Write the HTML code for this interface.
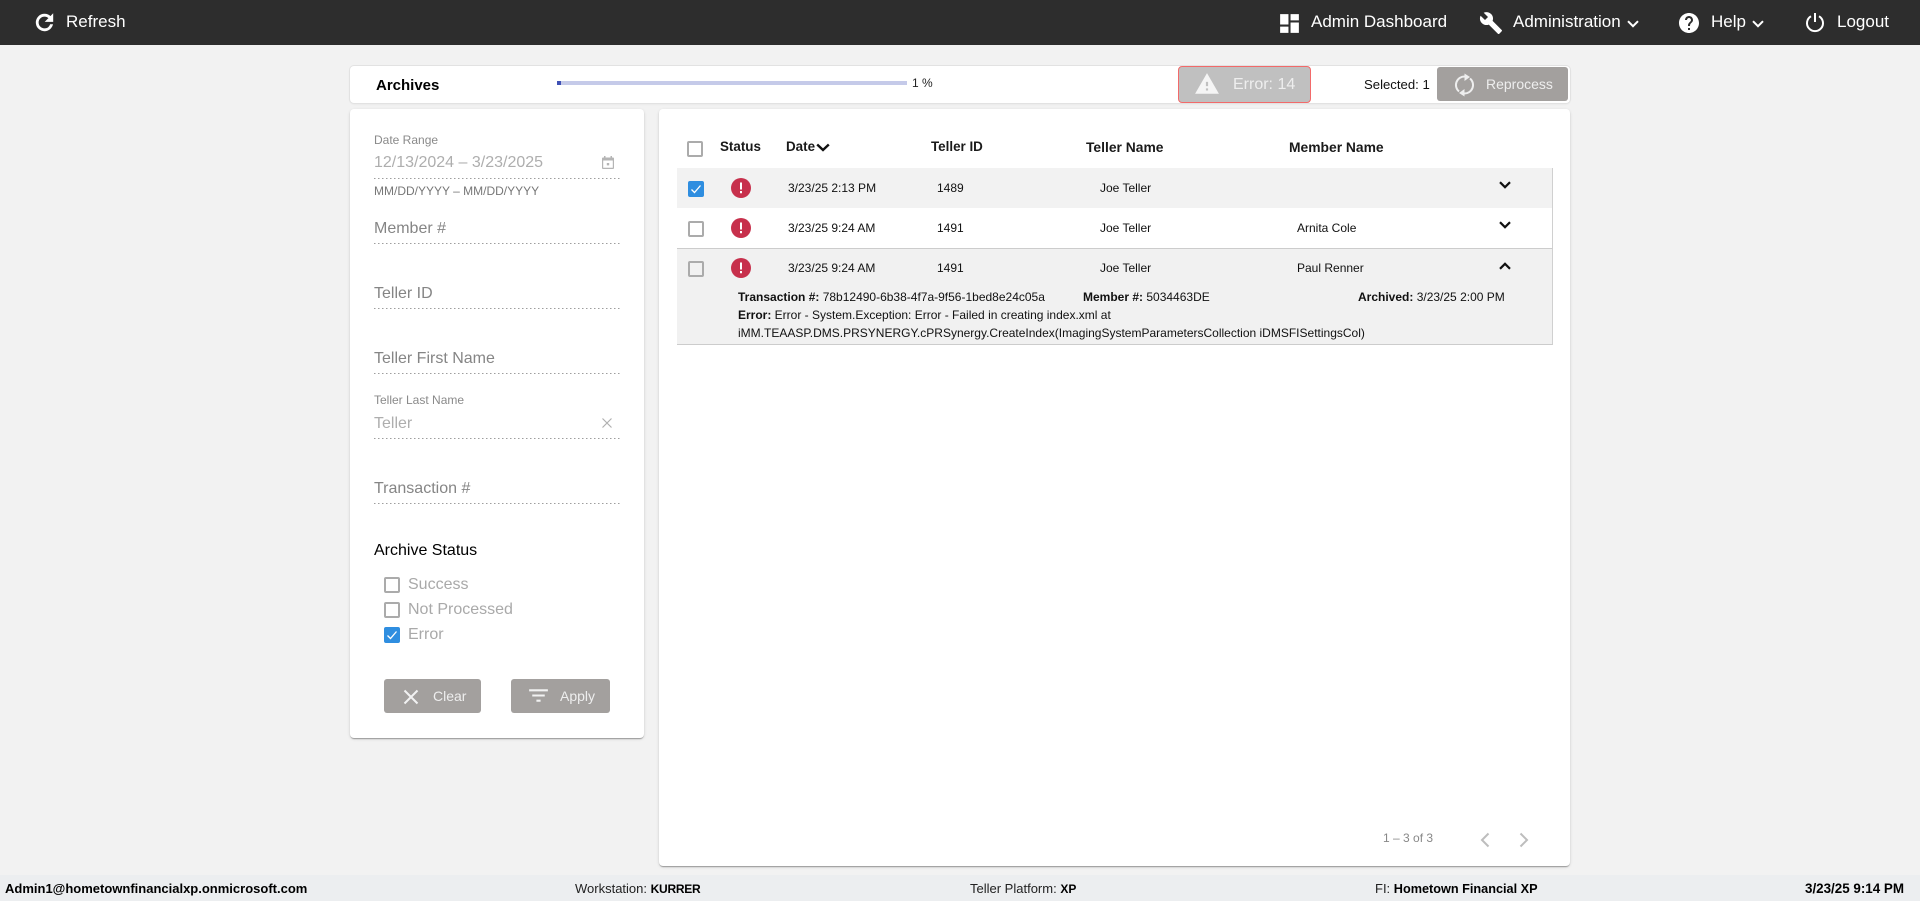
<!DOCTYPE html>
<html lang="en"><head><meta charset="utf-8"><title>Archives</title>
<style>
html,body{margin:0;padding:0;width:1920px;height:901px;overflow:hidden;background:#f2f2f2;font-family:"Liberation Sans",Arial,sans-serif;color:#000}
.a{position:absolute}
.t{position:absolute;white-space:nowrap;line-height:20px;height:20px}
svg{position:absolute;display:block;overflow:visible}
#bar{left:0;top:0;width:1920px;height:45px;background:#2d2d2d}
.n{font-size:17px;color:#fff}
.card{position:absolute;background:#fff;border-radius:4px;box-shadow:0 2px 1px -1px rgba(0,0,0,.2),0 1px 1px 0 rgba(0,0,0,.14),0 1px 3px 0 rgba(0,0,0,.12)}
.l{position:absolute;left:374px;width:246px;height:1px;background:linear-gradient(to right,rgba(0,0,0,.38) 0,rgba(0,0,0,.38) 33%,transparent 33%) repeat-x;background-size:4px 1px}
.ph{font-size:16px;color:#858585;left:374px}
.val{font-size:16px;color:#aeaeae;left:374px}
.lab{font-size:12px;color:#8a8a8a;left:374px}
.cb{position:absolute;width:12px;height:12px;border:2px solid #ababab;border-radius:2px;background:transparent}
.cb.on{background:#2f8ee0;border-color:#2f8ee0}
.cb.on svg{left:-1px;top:-1px}
.cl{font-size:16px;color:#a9a9a9;left:408px}
.btn{position:absolute;background:#a3a09e;border-radius:3px}
.bt{font-size:14px;color:#eee}
.h{font-size:13.4px;font-weight:bold;color:#1a1a1a}
.h2{font-size:13.85px}
.r{font-size:12px;color:#111}
.r b{font-weight:bold}
.row{position:absolute;left:677px;width:876px;border-right:1px solid #d0d0d0;box-sizing:border-box}
.f{font-size:13px;color:#222}
.f b{color:#000}
.b{font-size:13px;font-weight:bold;color:#000}
</style></head><body>

<div id="bar" class="a"></div>
<svg style="left:32px;top:10px" width="25" height="25" viewBox="0 0 24 24"><path fill="#fff" stroke="#fff" stroke-width=".7" d="M17.65 6.35C16.2 4.9 14.21 4 12 4c-4.42 0-7.99 3.58-7.99 8s3.57 8 7.99 8c3.73 0 6.84-2.55 7.73-6h-2.08c-.82 2.33-3.04 4-5.65 4-3.31 0-6-2.69-6-6s2.69-6 6-6c1.66 0 3.14.69 4.22 1.78L13 11h7V4l-2.35 2.35z"/></svg>
<div class="t n" style="left:66px;top:12px">Refresh</div>

<svg style="left:1277px;top:11px" width="25" height="25" viewBox="0 0 24 24"><path fill="#fff" d="M3 13h8V3H3v10zm0 8h8v-6H3v6zm10 0h8V11h-8v10zm0-18v6h8V3h-8z"/></svg>
<div class="t n" style="left:1311px;top:12px">Admin Dashboard</div>
<svg style="left:1479px;top:11px" width="24" height="24" viewBox="0 0 24 24"><path fill="#fff" d="M22.7 19l-9.1-9.1c.9-2.3.4-5-1.5-6.9-2-2-5-2.4-7.4-1.3L9 6 6 9 1.6 4.7C.4 7.1.9 10.1 2.9 12.1c1.9 1.900 4.6 2.4 6.9 1.500l9.1 9.1c.4.4 1 .4 1.4 0l2.3-2.3c.5-.4.5-1.1.1-1.4z"/></svg>
<div class="t n" style="left:1513px;top:12px">Administration</div>
<svg style="left:1627px;top:20px" width="12" height="8" viewBox="0 0 12 8"><path d="M1 1.200L6 6.200 11 1.200" fill="none" stroke="#fff" stroke-width="2"/></svg>
<svg style="left:1677px;top:11px" width="24" height="24" viewBox="0 0 24 24"><path fill="#fff" d="M12 2C6.48 2 2 6.48 2 12s4.48 10 10 10 10-4.48 10-10S17.52 2 12 2zm1 17h-2v-2h2v2zm2.07-7.75l-.9.92C13.45 12.9 13 13.5 13 15h-2v-.5c0-1.1.45-2.1 1.17-2.83l1.24-1.26c.37-.36.59-.86.59-1.41 0-1.1-.9-2-2-2s-2 .9-2 2H8c0-2.21 1.79-4 4-4s4 1.79 4 4c0 .88-.36 1.68-.93 2.25z"/></svg>
<div class="t n" style="left:1711px;top:12px">Help</div>
<svg style="left:1752px;top:20px" width="12" height="8" viewBox="0 0 12 8"><path d="M1 1.200L6 6.200 11 1.200" fill="none" stroke="#fff" stroke-width="2"/></svg>
<svg style="left:1805px;top:12px" width="20" height="20" viewBox="0 0 20 20"><path d="M6 4.200A8 8 0 1 0 14 4.200M10 1v9" fill="none" stroke="#fff" stroke-width="2"/></svg>
<div class="t n" style="left:1837px;top:12px">Logout</div>

<!-- header card -->
<div class="card" style="left:350px;top:66px;width:1220px;height:37px;box-shadow:0 0 0 1px #e2e2e2,0 1px 2px rgba(0,0,0,.08)"></div>
<div class="t" style="left:376px;top:76px;font-size:15px;font-weight:bold">Archives</div>
<div class="a" style="left:557px;top:81px;width:350px;height:4px;background:#c5cae9"></div>
<div class="a" style="left:557px;top:81px;width:3.5px;height:4px;background:#3f51b5"></div>
<div class="t" style="left:912px;top:73px;font-size:12px;color:#222">1 %</div>
<div class="a" style="left:1178px;top:66px;width:131px;height:35px;background:#c0c0c0;border:1px solid #f26a6a;border-radius:4px"></div>
<svg style="left:1194px;top:71px" width="26" height="26" viewBox="0 0 24 24"><path fill="#f5f5f5" d="M1 21h22L12 2 1 21zm12-3h-2v-2h2v2zm0-4h-2v-4h2v4z"/></svg>
<div class="t" style="left:1233px;top:75px;font-size:16px;color:#eee">Error: 14</div>
<div class="t" style="left:1364px;top:75px;font-size:13.15px;color:#111">Selected: 1</div>
<div class="btn" style="left:1437px;top:67px;width:131px;height:34px"></div>
<svg style="left:1454px;top:73px" width="22" height="24" viewBox="0 0 22 24"><g fill="none" stroke="#eee" stroke-width="2"><path d="M11 3.500A8.500 8.500 0 0 0 5 18.500"/><path d="M10 20.500A8.500 8.500 0 0 0 16 5.500"/></g><path fill="#eee" d="M10.500.5L16 4l-5.500 4zM10.500 16L5 20l5.500 3.500z"/></svg>
<div class="t bt" style="left:1486px;top:74px">Reprocess</div>

<!-- filter card -->
<div class="card" style="left:350px;top:109px;width:294px;height:629px"></div>
<div class="t lab" style="top:130px">Date Range</div>
<div class="t val" style="top:153px">12/13/2024 – 3/23/2025</div>
<svg style="left:600px;top:154px" width="16" height="16" viewBox="0 0 16 16"><path fill="#b5b5b5" d="M4 2h1.500v1.500h5V2H12v1.500h1c.6 0 1 .4 1 1V14c0 .6-.4 1-1 1H3c-.6 0-1-.4-1-1V4.500c0-.6.4-1 1-1h1zM3.200 6.500V13.800h9.600V6.500zM6.800 9h2.400v2.400H6.800z"/></svg>
<div class="l" style="top:178px"></div>
<div class="t" style="left:374px;top:181px;font-size:12px;color:#777">MM/DD/YYYY – MM/DD/YYYY</div>

<div class="t ph" style="top:219px">Member #</div><div class="l" style="top:243px"></div>
<div class="t ph" style="top:284px">Teller ID</div><div class="l" style="top:308px"></div>
<div class="t ph" style="top:349px">Teller First Name</div><div class="l" style="top:373px"></div>
<div class="t lab" style="top:390px">Teller Last Name</div>
<div class="t val" style="top:414px">Teller</div>
<svg style="left:602px;top:418px" width="10" height="10" viewBox="0 0 10 10"><path d="M.5.5l9 9M9.500.5l-9 9" stroke="#b0b0b0" stroke-width="1.200"/></svg>
<div class="l" style="top:438px"></div>
<div class="t ph" style="top:479px">Transaction #</div><div class="l" style="top:503px"></div>
<div class="t" style="left:374px;top:541px;font-size:16px">Archive Status</div>

<div class="cb" style="left:384px;top:577px"></div><div class="t cl" style="top:575px">Success</div>
<div class="cb" style="left:384px;top:602px"></div><div class="t cl" style="top:600px">Not Processed</div>
<div class="cb on" style="left:384px;top:627px"><svg width="14" height="14" viewBox="0 0 14 14"><path d="M2.500 7.500l3 3 6-7" fill="none" stroke="#fff" stroke-width="1.300"/></svg></div><div class="t cl" style="top:625px">Error</div>

<div class="btn" style="left:384px;top:679px;width:97px;height:34px"></div>
<svg style="left:403px;top:689px" width="16" height="16" viewBox="0 0 16 16"><path d="M1.500 1.500l13 13M14.500 1.500l-13 13" stroke="#f2f2f2" stroke-width="2"/></svg>
<div class="t bt" style="left:433px;top:686px">Clear</div>
<div class="btn" style="left:511px;top:679px;width:99px;height:34px"></div>
<svg style="left:526px;top:683px" width="25" height="25" viewBox="0 0 24 24"><path fill="#f2f2f2" d="M10 18h4v-2h-4v2zM3 6v2h18V6H3zm3 7h12v-2H6v2z"/></svg>
<div class="t bt" style="left:560px;top:686px">Apply</div>

<!-- table card -->
<div class="card" style="left:659px;top:109px;width:911px;height:757px"></div>
<div class="cb" style="left:687px;top:141px"></div>
<div class="t h" style="left:720px;top:137px">Status</div>
<div class="t h" style="left:786px;top:137px">Date</div>
<svg style="left:816px;top:143px" width="14" height="9" viewBox="0 0 14 9"><path d="M1.200 1.500L7 7l5.800-5.500" fill="none" stroke="#111" stroke-width="2.400"/></svg>
<div class="t h" style="left:931px;top:137px">Teller ID</div>
<div class="t h h2" style="left:1086px;top:137px">Teller Name</div>
<div class="t h h2" style="left:1289px;top:137px">Member Name</div>

<div class="row" style="top:168px;height:40px;background:#f2f2f2"></div>
<div class="row" style="top:208px;height:40px;background:#fff"></div>
<div class="row" style="top:248px;height:97px;background:#f1f1f1;border-top:1px solid #ccc;border-bottom:1px solid #ccc"></div>

<div class="cb on" style="left:688px;top:181px"><svg width="14" height="14" viewBox="0 0 14 14"><path d="M2.500 7.500l3 3 6-7" fill="none" stroke="#fff" stroke-width="1.300"/></svg></div>
<div class="cb" style="left:688px;top:221px"></div>
<div class="cb" style="left:688px;top:261px"></div>

<svg style="left:731px;top:178px" width="20" height="20" viewBox="0 0 20 20"><circle cx="10" cy="10" r="10" fill="#c7304c"/><path fill="#fff" d="M9 4.500h2v7H9zM9 13h2v2.200H9z"/></svg>
<svg style="left:731px;top:218px" width="20" height="20" viewBox="0 0 20 20"><circle cx="10" cy="10" r="10" fill="#c7304c"/><path fill="#fff" d="M9 4.500h2v7H9zM9 13h2v2.200H9z"/></svg>
<svg style="left:731px;top:258px" width="20" height="20" viewBox="0 0 20 20"><circle cx="10" cy="10" r="10" fill="#c7304c"/><path fill="#fff" d="M9 4.500h2v7H9zM9 13h2v2.200H9z"/></svg>

<div class="t r" style="left:788px;top:178px">3/23/25 2:13 PM</div>
<div class="t r" style="left:937px;top:178px">1489</div>
<div class="t r" style="left:1100px;top:178px">Joe Teller</div>
<div class="t r" style="left:788px;top:218px">3/23/25 9:24 AM</div>
<div class="t r" style="left:937px;top:218px">1491</div>
<div class="t r" style="left:1100px;top:218px">Joe Teller</div>
<div class="t r" style="left:1297px;top:218px">Arnita Cole</div>
<div class="t r" style="left:788px;top:258px">3/23/25 9:24 AM</div>
<div class="t r" style="left:937px;top:258px">1491</div>
<div class="t r" style="left:1100px;top:258px">Joe Teller</div>
<div class="t r" style="left:1297px;top:258px">Paul Renner</div>

<svg style="left:1499px;top:181px" width="12" height="8" viewBox="0 0 12 8"><path d="M1 1.200L6 6.200 11 1.200" fill="none" stroke="#111" stroke-width="2.200"/></svg>
<svg style="left:1499px;top:221px" width="12" height="8" viewBox="0 0 12 8"><path d="M1 1.200L6 6.200 11 1.200" fill="none" stroke="#111" stroke-width="2.200"/></svg>
<svg style="left:1499px;top:262px" width="12" height="8" viewBox="0 0 12 8"><path d="M1 6.800L6 1.800 11 6.800" fill="none" stroke="#111" stroke-width="2.200"/></svg>

<div class="t r" style="left:738px;top:287px"><b>Transaction #:</b> 78b12490-6b38-4f7a-9f56-1bed8e24c05a</div>
<div class="t r" style="left:1083px;top:287px"><b>Member #:</b> 5034463DE</div>
<div class="t r" style="left:1358px;top:287px"><b>Archived:</b> 3/23/25 2:00 PM</div>
<div class="t r" style="left:738px;top:305px"><b>Error:</b> Error - System.Exception: Error - Failed in creating index.xml at</div>
<div class="t r" style="left:738px;top:323px">iMM.TEAASP.DMS.PRSYNERGY.cPRSynergy.CreateIndex(ImagingSystemParametersCollection iDMSFISettingsCol)</div>

<div class="t" style="left:1383px;top:828px;font-size:12px;color:#888">1 – 3 of 3</div>
<svg style="left:1479px;top:832px" width="11" height="16" viewBox="0 0 11 16"><path d="M9.500 1.500L3 8l6.500 6.500" fill="none" stroke="#bdbdbd" stroke-width="2"/></svg>
<svg style="left:1519px;top:832px" width="11" height="16" viewBox="0 0 11 16"><path d="M1.500 1.500L8 8l-6.500 6.500" fill="none" stroke="#bdbdbd" stroke-width="2"/></svg>

<!-- footer -->
<div class="a" style="left:0;top:875px;width:1920px;height:26px;background:#eceef0"></div>
<div class="t b" style="left:5px;top:879px">Admin1@hometownfinancialxp.onmicrosoft.com</div>
<div class="t f" style="left:575px;top:879px">Workstation: <b style="font-size:12px;letter-spacing:-.25px">KURRER</b></div>
<div class="t f" style="left:970px;top:879px">Teller Platform: <b style="font-size:12px">XP</b></div>
<div class="t f" style="left:1375px;top:879px">FI: <b style="font-size:12.7px">Hometown Financial XP</b></div>
<div class="t b" style="left:1805px;top:879px;font-size:13.4px">3/23/25 9:14 PM</div>
</body></html>
